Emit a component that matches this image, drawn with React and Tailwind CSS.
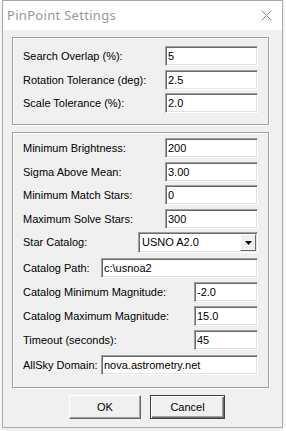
import React from "react";

const font = { fontFamily: '"Liberation Sans", Arial, sans-serif' };

const group1 = [
  { label: "Search Overlap (%):", value: "5", w: "w-[93px]", mt: "mt-[8px]" },
  { label: "Rotation Tolerance (deg):", value: "2.5", w: "w-[93px]", mt: "mt-[4px]" },
  { label: "Scale Tolerance (%):", value: "2.0", w: "w-[93px]", mt: "mt-[3px]" },
];

const group2 = [
  { label: "Minimum Brightness:", value: "200", w: "w-[93px]", mt: "mt-[5px]" },
  { label: "Sigma Above Mean:", value: "3.00", w: "w-[93px]", mt: "mt-[4px]" },
  { label: "Minimum Match Stars:", value: "0", w: "w-[93px]", mt: "mt-[3px]" },
  { label: "Maximum Solve Stars:", value: "300", w: "w-[93px]", mt: "mt-[4px]" },
  { label: "Star Catalog:", value: "USNO A2.0", w: "w-[120px]", mt: "mt-[3px]", combo: true },
  { label: "Catalog Path:", value: "c:\\usnoa2", w: "w-[157px]", mt: "mt-[5px]" },
  { label: "Catalog Minimum Magnitude:", value: "-2.0", w: "w-[64px]", mt: "mt-[4px]" },
  { label: "Catalog Maximum Magnitude:", value: "15.0", w: "w-[64px]", mt: "mt-[4px]" },
  { label: "Timeout (seconds):", value: "45", w: "w-[64px]", mt: "mt-[4px]" },
  { label: "AllSky Domain:", value: "nova.astrometry.net", w: "w-[157px]", mt: "mt-[5px]" },
];

const Field = ({ row }) => {
  if (row.combo) {
    return (
      <div
        className={`${row.w} h-[21px] flex items-center bg-white border border-t-[#a0a0a0] border-l-[#a0a0a0] border-r-white border-b-white shadow-[inset_1px_1px_0_#696969,inset_-1px_-1px_0_#e3e3e3]`}
      >
        <span className="flex-1 pl-[3px] text-[11px] leading-none text-black">{row.value}</span>
        <div className="w-[16px] h-[17px] mr-[1px] flex items-center justify-center bg-[#f0f0f0] border border-t-white border-l-white border-r-[#696969] border-b-[#696969]">
          <svg width="7" height="4" viewBox="0 0 7 4">
            <path d="M0 0h7L3.5 4z" fill="#000" />
          </svg>
        </div>
      </div>
    );
  }
  return (
    <div
      className={`${row.w} h-[20px] flex items-center bg-white border border-t-[#a0a0a0] border-l-[#a0a0a0] border-r-white border-b-white shadow-[inset_1px_1px_0_#696969,inset_-1px_-1px_0_#e3e3e3]`}
    >
      <span className="pl-[2px] text-[11px] leading-none text-black whitespace-nowrap">{row.value}</span>
    </div>
  );
};

const Row = ({ row }) => (
  <div className={`${row.mt} flex items-center`}>
    <span className="pl-[10px] text-[11px] leading-none text-black whitespace-nowrap">{row.label}</span>
    <div className="ml-auto mr-[10px]">
      <Field row={row} />
    </div>
  </div>
);

const Group = ({ rows, h }) => (
  <div
    className={`ml-[9px] mt-[7px] w-[257px] ${h} border border-[#a0a0a0] shadow-[inset_1px_1px_0_#fff,1px_1px_0_#fff] flex flex-col`}
  >
    {rows.map((r) => (
      <Row key={r.label} row={r} />
    ))}
  </div>
);

export default function App() {
  return (
    <div className="w-[286px] h-[431px] bg-white overflow-hidden" style={font}>
      <div className="ml-[2px] w-[281px] h-[428px] border border-[#aaaaaa] bg-[#f0f0f0] shadow-[0_2px_6px_rgba(0,0,0,0.12)] flex flex-col">
        {/* title bar */}
        <div className="h-[29px] bg-white flex items-center pl-[4px] pr-[10px]">
          <span
            className="text-[13px] tracking-[0.3px] text-[#999999] leading-none"
            style={{ fontFamily: '"Noto Sans", "Open Sans", sans-serif' }}
          >
            PinPoint Settings
          </span>
          <svg className="ml-auto" width="11" height="11" viewBox="0 0 11 11">
            <path d="M0.5 0.5L10.5 10.5M10.5 0.5L0.5 10.5" stroke="#8a8a8a" strokeWidth="1" />
          </svg>
        </div>

        <Group rows={group1} h="h-[88px]" />
        <Group rows={group2} h="h-[256px]" />

        {/* buttons */}
        <div className="mt-[7px] flex pl-[66px] gap-[9px]">
          <button className="w-[72px] h-[24px] bg-[#f0f0f0] border border-t-white border-l-white border-r-[#696969] border-b-[#696969] shadow-[inset_-1px_-1px_0_#a0a0a0] text-[11px] text-black">
            OK
          </button>
          <button className="w-[75px] h-[24px] bg-[#f0f0f0] border border-[#404040] shadow-[inset_1px_1px_0_#fff,inset_-1px_-1px_0_#696969,inset_-2px_-2px_0_#a0a0a0] text-[11px] text-black">
            Cancel
          </button>
        </div>
      </div>
    </div>
  );
}
